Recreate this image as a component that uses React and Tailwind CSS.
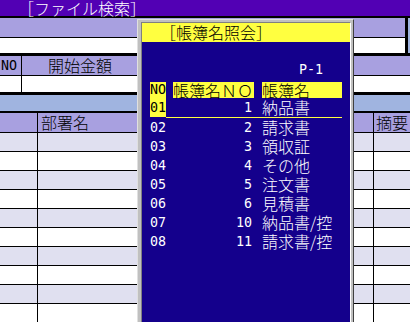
const ROWS = [
  { no: "01", num: "1", name: "納品書" },
  { no: "02", num: "2", name: "請求書" },
  { no: "03", num: "3", name: "領収証" },
  { no: "04", num: "4", name: "その他" },
  { no: "05", num: "5", name: "注文書" },
  { no: "06", num: "6", name: "見積書" },
  { no: "07", num: "10", name: "納品書/控" },
  { no: "08", num: "11", name: "請求書/控" },
];

const jp = "font-['Noto_Sans_CJK_JP',sans-serif] text-[16px] font-light";
const mono = "font-['DejaVu_Sans_Mono',monospace] text-[13.33px]";

const LedgerDialog = () => (
  <div className="absolute left-[137px] top-[19px] w-[217px] h-[320px] bg-[#c0c0c0] border border-t-[#e0e0e0] border-l-[#e0e0e0] border-r-[#404040] border-b-[#404040] pl-[3px] pr-[2px] pt-[2px]">
    <div className="h-full flex flex-col border border-t-[#808080] border-l-[#808080] border-r-white border-b-white">
      {/* Title */}
      <div className={`h-[19px] bg-[#ffff40] text-black pl-[18px] leading-[19px] whitespace-nowrap ${jp}`}>
        ［帳簿名照会］
      </div>

      {/* Body */}
      <div className="flex-1 bg-[#14008c] text-white">
        <div className={`h-[40px] pt-[21px] pr-[27px] text-right leading-[14px] ${mono}`}>
          P-1
        </div>

        {/* Column headers */}
        <div className="flex h-[16px] pl-[8px] text-black">
          <div className={`w-[16px] bg-[#ffff40] flex items-center justify-center leading-[16px] ${mono}`}>
            NO
          </div>
          <div className={`ml-[7px] w-[81px] bg-[#ffff40] leading-[16px] whitespace-nowrap ${jp}`}>
            帳簿名ＮＯ
          </div>
          <div className={`ml-[8px] w-[80px] bg-[#ffff40] leading-[16px] ${jp}`}>
            帳簿名
          </div>
        </div>

        {ROWS.map((row, i) => (
          <div key={row.no}>
            <div className="flex h-[19px] pl-[8px] items-stretch">
              <div
                className={`w-[16px] flex items-center justify-center ${mono} ${
                  i === 0 ? "bg-[#ffff40] text-black" : ""
                }`}
              >
                {row.no}
              </div>
              <div className={`ml-[7px] w-[81px] pr-[2px] flex items-center justify-end ${mono}`}>
                {row.num}
              </div>
              <div className={`ml-[8px] w-[80px] leading-[19px] whitespace-nowrap ${jp}`}>
                {row.name}
              </div>
            </div>
            {i === 0 && <div className="ml-[24px] w-[176px] h-px bg-[#ffff40]" />}
          </div>
        ))}
      </div>
    </div>
  </div>
);

export default function App() {
  return (
    <div className={`relative w-[410px] h-[322px] overflow-hidden bg-white text-black ${jp}`}>
      {/* Window title */}
      <div className="h-[16px] bg-[#5200b4] text-white pl-[18px] leading-[16px] whitespace-nowrap">
        ［ファイル検索］
      </div>
      <div className="h-[2px] bg-black" />

      {/* Upper block */}
      <div className="flex">
        <div className="flex-1">
          <div className="h-[19px] bg-[#a8a0e0]" />
          <div className="h-px bg-black" />
          <div className="h-[15px] bg-white" />
        </div>
        <div className="w-[3px] bg-black" />
        <div className="w-[2px] bg-[#a0b4e0]" />
      </div>
      <div className="h-[3px] bg-black" />

      {/* NO / 開始金額 */}
      <div className="flex h-[19px] bg-[#a8a0e0]">
        <div className={`w-[21px] pl-[1px] leading-[19px] ${mono}`}>NO</div>
        <div className="w-px bg-black" />
        <div className="flex-1 pl-[26px] leading-[19px]">開始金額</div>
      </div>
      <div className="h-px bg-black" />
      <div className="flex h-[16px] bg-white">
        <div className="w-[21px]" />
        <div className="w-px bg-black" />
        <div className="flex-1" />
      </div>
      <div className="h-[3px] bg-black" />

      {/* Separator band */}
      <div className="h-[16px] bg-[#a0b4e0]" />
      <div className="h-[2px] bg-black" />

      {/* List table */}
      <div className="flex h-[19px] bg-[#a8a0e0] leading-[19px]">
        <div className="w-[37px]" />
        <div className="w-px bg-black" />
        <div className="w-[180px] pl-[3px]">部署名</div>
        <div className="flex-1" />
        <div className="w-px bg-black" />
        <div className="w-[36px] pl-[2px] whitespace-nowrap">摘要</div>
      </div>
      {Array.from({ length: 10 }).map((_, i) => (
        <div key={i}>
          <div className="h-px bg-black" />
          <div className={`flex h-[18px] ${i % 2 === 0 ? "bg-[#e0e0f0]" : "bg-white"}`}>
            <div className="w-[37px]" />
            <div className="w-px bg-black" />
            <div className="w-[180px]" />
            <div className="flex-1" />
            <div className="w-px bg-black" />
            <div className="w-[36px]" />
          </div>
        </div>
      ))}

      <LedgerDialog />
    </div>
  );
}
